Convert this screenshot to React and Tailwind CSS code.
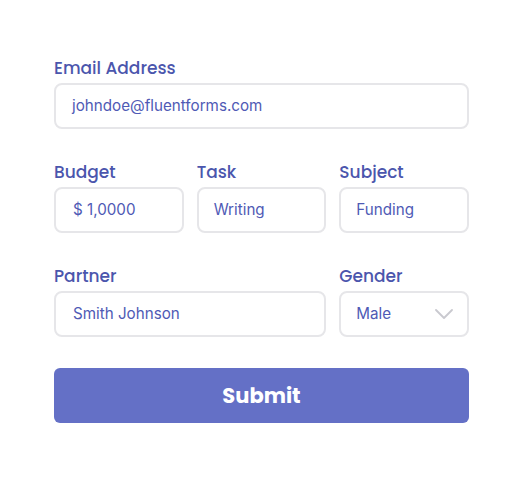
import React from "react";

const labelCls = "block text-[17px] leading-[24px] font-medium text-[#4b56ad] mb-[3px]";
const inputCls = "flex items-center h-[46px] rounded-[8px] border-2 border-[#e6e6e9] bg-white text-[15.2px] text-[#4f5ab5]";

function Field({ label, value, className = "", pl = "pl-[15px]", children }) {
  return (
    <div className={className}>
      <div className={labelCls} style={{ fontFamily: "Poppins, 'Open Sans', sans-serif" }}>{label}</div>
      <div className={`${inputCls} ${pl} pr-[14px] justify-between`} style={{ fontFamily: "Inter, sans-serif" }}>
        <span>{value}</span>
        {children}
      </div>
    </div>
  );
}

export default function App() {
  return (
    <div className="w-[528px] h-[482px] bg-white pt-[56px] pl-[54px]">
      <div className="w-[415px]">
        <div className="grid grid-cols-3 gap-x-[13px] gap-y-[31px]">
          <Field className="col-span-3" label="Email Address" value="johndoe@fluentforms.com" pl="pl-[16px]" />
          <Field label="Budget" value="$ 1,0000" pl="pl-[17px]" />
          <Field label="Task" value="Writing" />
          <Field label="Subject" value="Funding" />
          <Field className="col-span-2" label="Partner" value="Smith Johnson" pl="pl-[17px]" />
          <Field label="Gender" value="Male">
            <svg width="18" height="10" viewBox="0 0 18 10" fill="none">
              <path d="M1 1l8 8 8-8" stroke="#c9c9cf" strokeWidth="1.8" strokeLinecap="round" strokeLinejoin="round" />
            </svg>
          </Field>
        </div>
        <button
          className="mt-[31px] w-full h-[55px] rounded-[6px] bg-[#6470c6] text-white text-[21px] font-bold"
          style={{ fontFamily: "Poppins, 'Open Sans', sans-serif" }}
        >
          Submit
        </button>
      </div>
    </div>
  );
}
